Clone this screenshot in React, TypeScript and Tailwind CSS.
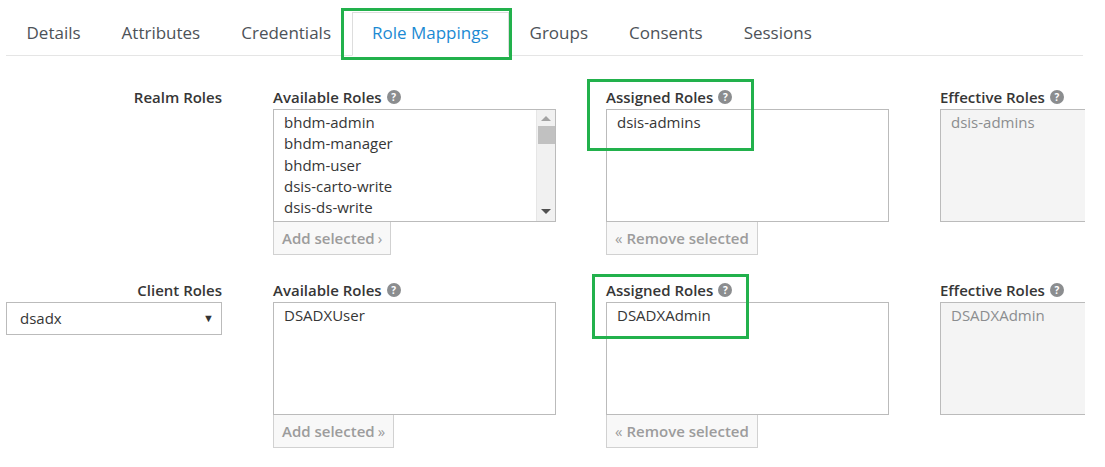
const tabs = ["Details", "Attributes", "Credentials", "Role Mappings", "Groups", "Consents", "Sessions"];

const Help = () => (
  <span className="ml-[5px] inline-flex h-[14px] w-[14px] items-center justify-center rounded-full bg-[#8b8d8f] text-[10px] font-bold leading-none text-white">
    ?
  </span>
);

const Label = ({ text, help = true }: { text: string; help?: boolean }) => (
  <div className="flex h-[20px] items-center text-[15px] font-semibold text-[#363636]">
    {text}
    {help && <Help />}
  </div>
);

const Scrollbar = () => (
  <div className="flex w-[19px] flex-col items-center border-l border-[#e6e6e6] bg-[#f1f1f1]">
    <div className="mt-[6px] h-0 w-0 border-x-[5px] border-b-[5px] border-x-transparent border-b-[#a3a3a3]" />
    <div className="mt-[5px] h-[18px] w-[17px] bg-[#c1c1c1]" />
    <div className="flex-1" />
    <div className="mb-[7px] h-0 w-0 border-x-[5px] border-t-[5px] border-x-transparent border-t-[#505050]" />
  </div>
);

const ListBox = ({ items, disabled = false, scroll = false, h = 113 }: { items: string[]; disabled?: boolean; scroll?: boolean; h?: number }) => (
  <div
    className={`flex border border-[#bbbbbb] ${disabled ? "bg-[#f4f4f4] text-[#8b8d8f]" : "bg-white text-[#363636]"}`}
    style={{ height: h }}
  >
    <div className="flex-1 px-[10px] pt-[2px] text-[15px] leading-[21.3px]">
      {items.map((i) => (
        <div key={i}>{i}</div>
      ))}
    </div>
    {scroll && <Scrollbar />}
  </div>
);

const Btn = ({ children }: { children: React.ReactNode }) => (
  <div className="inline-flex h-[33px] items-center border border-[#d1d1d1] border-t-0 bg-[#f8f8f8] px-[8px] text-[15px] font-semibold text-[#9c9c9c]">
    {children}
  </div>
);

export default function App() {
  return (
    <div className="relative h-[467px] w-[1105px] overflow-hidden bg-white font-['Open_Sans',sans-serif]">
      {/* tabs */}
      <div className="ml-[6px] mt-[12px] flex w-[1077px] border-b border-[#e5e5e5]">
        {tabs.map((t) => (
          <div
            key={t}
            className={`px-[19.5px] pb-[10px] pt-[8px] text-[17px] leading-[23px] ${
              t === "Role Mappings"
                ? "-mb-px border border-b-white border-[#dddddd] bg-white text-[#1b8ad3]"
                : "border border-transparent text-[#4d5258]"
            }`}
          >
            {t}
          </div>
        ))}
      </div>

      {/* realm roles */}
      <div className="mt-[31px] flex pl-[6px]">
        <div className="flex w-[216px] justify-end">
          <Label text="Realm Roles" help={false} />
        </div>
        <div className="ml-[51px] w-[283px]">
          <Label text="Available Roles" />
          <div className="mt-[2px]">
            <ListBox items={["bhdm-admin", "bhdm-manager", "bhdm-user", "dsis-carto-write", "dsis-ds-write"]} scroll />
          </div>
          <Btn>
            Add selected <span className="ml-[3px] font-normal">›</span>
          </Btn>
        </div>
        <div className="ml-[50px] w-[283px]">
          <Label text="Assigned Roles" />
          <div className="mt-[2px]">
            <ListBox items={["dsis-admins"]} />
          </div>
          <Btn>
            <span className="mr-[4px] font-normal">«</span>Remove selected
          </Btn>
        </div>
        <div className="ml-[51px] w-[160px]">
          <Label text="Effective Roles" />
          <div className="mt-[2px]">
            <ListBox items={["dsis-admins"]} disabled />
          </div>
        </div>
      </div>

      {/* client roles */}
      <div className="mt-[25px] flex pl-[6px]">
        <div className="w-[216px]">
          <div className="flex justify-end">
            <Label text="Client Roles" help={false} />
          </div>
          <div className="mt-[2px] flex h-[33px] items-center justify-between border border-[#bbbbbb] pl-[13px] pr-[7px] text-[15px] text-[#363636]">
            <span>dsadx</span>
            <span className="text-[11px] text-[#333]">▼</span>
          </div>
        </div>
        <div className="ml-[51px] w-[283px]">
          <Label text="Available Roles" />
          <div className="mt-[2px]">
            <ListBox items={["DSADXUser"]} />
          </div>
          <Btn>
            Add selected <span className="ml-[3px] font-normal">»</span>
          </Btn>
        </div>
        <div className="ml-[50px] w-[283px]">
          <Label text="Assigned Roles" />
          <div className="mt-[2px]">
            <ListBox items={["DSADXAdmin"]} />
          </div>
          <Btn>
            <span className="mr-[4px] font-normal">«</span>Remove selected
          </Btn>
        </div>
        <div className="ml-[51px] w-[160px]">
          <Label text="Effective Roles" />
          <div className="mt-[2px]">
            <ListBox items={["DSADXAdmin"]} disabled />
          </div>
        </div>
      </div>

      {/* white mask on right edge (screenshot crop) */}
      <div className="absolute right-0 top-[56px] h-[411px] w-[20px] bg-white" />

      {/* green annotation boxes */}
      <div className="absolute left-[341px] top-[8px] h-[52px] w-[171px] border-[3px] border-[#22b14c]" />
      <div className="absolute left-[587px] top-[79px] h-[72px] w-[167px] border-[3px] border-[#22b14c]" />
      <div className="absolute left-[592px] top-[274px] h-[65px] w-[157px] border-[3px] border-[#22b14c]" />
    </div>
  );
}
